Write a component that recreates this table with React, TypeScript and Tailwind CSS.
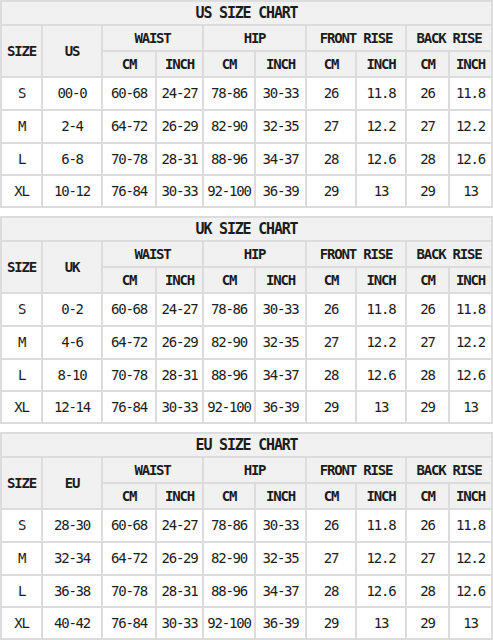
import React from 'react';

type Chart = {
  title: string;
  region: string;
  rows: string[][];
};

const charts: Chart[] = [
  {
    title: 'US SIZE CHART',
    region: 'US',
    rows: [
      ['S', '00-0', '60-68', '24-27', '78-86', '30-33', '26', '11.8', '26', '11.8'],
      ['M', '2-4', '64-72', '26-29', '82-90', '32-35', '27', '12.2', '27', '12.2'],
      ['L', '6-8', '70-78', '28-31', '88-96', '34-37', '28', '12.6', '28', '12.6'],
      ['XL', '10-12', '76-84', '30-33', '92-100', '36-39', '29', '13', '29', '13'],
    ],
  },
  {
    title: 'UK SIZE CHART',
    region: 'UK',
    rows: [
      ['S', '0-2', '60-68', '24-27', '78-86', '30-33', '26', '11.8', '26', '11.8'],
      ['M', '4-6', '64-72', '26-29', '82-90', '32-35', '27', '12.2', '27', '12.2'],
      ['L', '8-10', '70-78', '28-31', '88-96', '34-37', '28', '12.6', '28', '12.6'],
      ['XL', '12-14', '76-84', '30-33', '92-100', '36-39', '29', '13', '29', '13'],
    ],
  },
  {
    title: 'EU SIZE CHART',
    region: 'EU',
    rows: [
      ['S', '28-30', '60-68', '24-27', '78-86', '30-33', '26', '11.8', '26', '11.8'],
      ['M', '32-34', '64-72', '26-29', '82-90', '32-35', '27', '12.2', '27', '12.2'],
      ['L', '36-38', '70-78', '28-31', '88-96', '34-37', '28', '12.6', '28', '12.6'],
      ['XL', '40-42', '76-84', '30-33', '92-100', '36-39', '29', '13', '29', '13'],
    ],
  },
];

const head = 'bg-[#f1f1f1] flex items-center justify-center font-semibold';
const cell = 'bg-white flex items-center justify-center';

const SizeChart: React.FC<{ chart: Chart }> = ({ chart }) => {
  return (
    <div className="grid grid-cols-[39px_58px_52px_45px_50px_49px_48px_48px_41px_41px] grid-rows-[22px_24px_24px_31px_31px_30px_30px] gap-[2px] p-[2px] bg-[#dcdcdc] mb-[8px]">
      <div className={`${head} col-span-10 text-[15px] font-bold`}>{chart.title}</div>

      <div className={`${head} row-span-2`}>SIZE</div>
      <div className={`${head} row-span-2`}>{chart.region}</div>
      <div className={`${head} col-span-2`}>WAIST</div>
      <div className={`${head} col-span-2`}>HIP</div>
      <div className={`${head} col-span-2`}>FRONT RISE</div>
      <div className={`${head} col-span-2`}>BACK RISE</div>

      {['CM', 'INCH', 'CM', 'INCH', 'CM', 'INCH', 'CM', 'INCH'].map((u, i) => (
        <div key={i} className={head}>{u}</div>
      ))}

      {chart.rows.map((row, r) =>
        row.map((v, c) => (
          <div key={`${r}-${c}`} className={cell}>{v}</div>
        ))
      )}
    </div>
  );
};

export default function App() {
  return (
    <div className="w-[493px] bg-white text-[#1c1c1c] text-[14px] tracking-[-1.2px] font-['DejaVu_Sans_Mono',monospace]">
      {charts.map((chart) => (
        <SizeChart key={chart.region} chart={chart} />
      ))}
    </div>
  );
}
